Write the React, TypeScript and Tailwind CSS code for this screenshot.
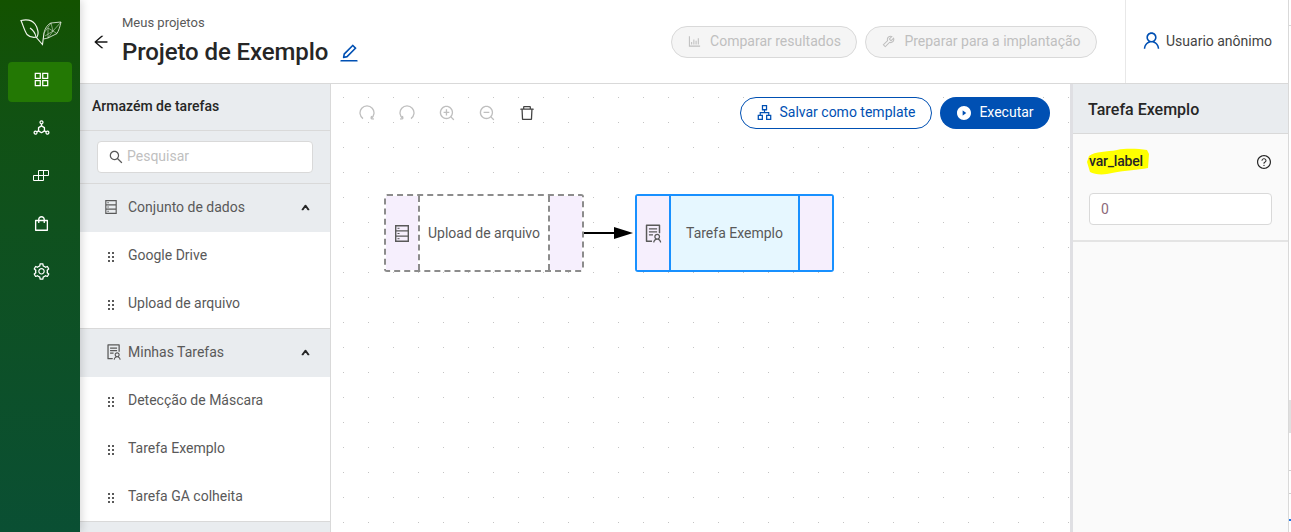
import type { ReactNode } from 'react';
import {
  AiOutlineAppstore,
  AiOutlineArrowLeft,
  AiOutlineBarChart,
  AiOutlineDelete,
  AiOutlineDeploymentUnit,
  AiOutlineEdit,
  AiOutlineQuestionCircle,
  AiOutlineSearch,
  AiOutlineSetting,
  AiOutlineShopping,
  AiOutlineSolution,
  AiOutlineTool,
  AiOutlineUp,
  AiOutlineUser,
  AiOutlineApartment,
  AiOutlineZoomIn,
  AiOutlineZoomOut,
  AiFillPlayCircle,
} from 'react-icons/ai';

function Logo() {
  return (
    <svg width="42" height="27" viewBox="0 0 42 27" fill="none" stroke="#f0f5ec">
      <path d="M1 1.5 C6 0.5 12 1 15 5 C18 9 19 15 17 18 C13 19 9 17.5 7 15.5 C4.5 12 3 6 1 1.5 Z" strokeWidth="1.2" />
      <path d="M10 9 C13 11 15 13 16 18 L22.5 25.5 L24 14" strokeWidth="1.1" />
      <path d="M24 14 C25 9 28 5 31 4 L41 3 C40 8 38.5 12 37 14.5 L28 19 L23.5 20" strokeWidth="0.8" />
      <path d="M24 14 L31 4 L33 12 L41 3 M33 12 L28 19 L28 9 L37 14.5 M25 17 L33 12" strokeWidth="0.5" />
    </svg>
  );
}

// the stepped blocks of the third rail entry
function BlocksIcon() {
  return (
    <svg width="16" height="11" viewBox="0 0 16 11" fill="none" stroke="currentColor" strokeWidth="1">
      <path d="M0.5 5.5 H10.5 V10.5 H0.5 Z M5.5 5.5 V0.5 H15.5 V5.5 H10.5 M5.5 5.5 V10.5 M10.5 0.5 V5.5" />
    </svg>
  );
}

// circular arrows of the canvas toolbar, the icon font has no exact match
function ArcIcon({ flip }: { flip?: boolean }) {
  return (
    <svg width="16" height="16" viewBox="0 0 16 16" fill="none" stroke="currentColor" strokeWidth="1.3" className={flip ? '-scale-x-100' : ''}>
      <path d="M4 13.6 A7 7 0 1 1 12 13.6" />
      <path d="M12 13.6 L12.6 11 M12 13.6 L14.8 14" />
    </svg>
  );
}

function DatasetIcon({ width, height }: { width: number; height: number }) {
  return (
    <svg width={width} height={height} viewBox="0 0 14 17" fill="none" stroke="#595959" strokeWidth="1.4">
      <path d="M0.7 0.7 H13.3 V16.3 H0.7 Z M0.7 5.9 H13.3 M0.7 11.1 H13.3" />
      <path d="M2.5 3.3 H4.5 M2.5 8.5 H4.5 M2.5 13.7 H4.5" strokeWidth="1" />
    </svg>
  );
}

function HolderDots() {
  return (
    <svg width="6" height="10" viewBox="0 0 6 10" fill="#595959">
      <path d="M0 0h2v2H0z M4 0h2v2H4z M0 4h2v2H0z M4 4h2v2H4z M0 8h2v2H0z M4 8h2v2H4z" />
    </svg>
  );
}

function RailItem({ icon, active }: { icon: ReactNode; active?: boolean }) {
  return (
    <div className={`flex h-10 w-16 items-center justify-center rounded-sm pb-[6px] pl-[2px] text-[19px] text-white ${active ? 'bg-[#237804]' : ''}`}>
      {icon}
    </div>
  );
}

function SectionHeader({ icon, label }: { icon: ReactNode; label: string }) {
  return (
    <div className="flex h-12 items-center bg-[#e9ecef] pb-[2px] pl-[25px] pr-[20px] text-[14px] text-[#595959]">
      <span className="flex w-[23px] text-[18px] text-[#595959]">{icon}</span>
      {label}
      <AiOutlineUp className="ml-auto text-[9px] text-[#262626]" strokeWidth={130} />
    </div>
  );
}

function TaskItem({ label }: { label: string }) {
  return (
    <div className="flex h-12 items-center bg-white pb-[2px] pl-[28px] text-[14px] text-[#595959]">
      <span className="mt-[3px] w-5">
        <HolderDots />
      </span>
      {label}
    </div>
  );
}

function ToolSlot({ children }: { children: ReactNode }) {
  return <span className="flex w-10 justify-center">{children}</span>;
}

function Node({ position, label, icon, selected }: { position: string; label: string; icon: ReactNode; selected?: boolean }) {
  const line = selected ? 'border-[#1890ff] border-solid' : 'border-[#8c8c8c] border-dashed';
  return (
    <div className={`absolute top-[110px] flex h-[78px] rounded-[3px] border-2 ${line} ${position}`}>
      <div className="flex w-8 items-center justify-center bg-[#f6effd] text-[21px] text-[#595959]">{icon}</div>
      <div className={`flex flex-1 items-center justify-center border-x-2 text-[14px] text-[#595959] ${line} ${selected ? 'bg-[#e6f7ff]' : 'bg-white'}`}>
        {label}
      </div>
      <div className="w-8 bg-[#f6effd]" />
    </div>
  );
}

export default function App() {
  return (
    <div className="flex h-[532px] w-[1291px] overflow-hidden bg-white font-['Roboto',sans-serif]">
      <nav className="relative z-10 flex w-20 shrink-0 flex-col items-center bg-gradient-to-b from-[#135200] to-[#0a4f33] shadow-[2px_0_8px_rgba(0,0,0,0.15)]">
        <div className="flex h-[62px] w-full items-start justify-center pl-[1px] pt-[19px]">
          <Logo />
        </div>
        <div className="flex flex-col gap-2">
          <RailItem active icon={<AiOutlineAppstore />} />
          <RailItem icon={<AiOutlineDeploymentUnit />} />
          <RailItem icon={<BlocksIcon />} />
          <RailItem icon={<AiOutlineShopping />} />
          <RailItem icon={<AiOutlineSetting />} />
        </div>
      </nav>

      <div className="flex min-w-0 flex-1 flex-col">
        <header className="flex h-[84px] shrink-0 items-center border-b border-[#d9d9d9] bg-white">
          <AiOutlineArrowLeft className="ml-3 text-[18px] text-[#141414]" />
          <div className="ml-3 mt-[14px] self-start">
            <div className="text-[13px] leading-[18px] text-[#595959]">Meus projetos</div>
            <div className="mt-[4px] flex items-center text-[24px] font-medium leading-[32px] tracking-[-0.1px] text-[#262626]">
              Projeto de Exemplo
              <AiOutlineEdit className="ml-[10px] mt-[2px] text-[22px] text-[#0050b3]" />
            </div>
          </div>
          <div className="ml-auto flex gap-2">
            <div className="flex h-8 w-[186px] items-center justify-center gap-2 rounded-full border border-[#d9d9d9] bg-[#f5f5f5] text-[14px] text-[#bfbfbf]">
              <AiOutlineBarChart className="text-[15px]" />
              Comparar resultados
            </div>
            <div className="flex h-8 w-[232px] items-center justify-center gap-2 rounded-full border border-[#d9d9d9] bg-[#f5f5f5] text-[14px] text-[#bfbfbf]">
              <AiOutlineTool className="text-[15px]" />
              Preparar para a implantação
            </div>
          </div>
          <div className="ml-7 flex h-full w-[163px] items-center gap-[4px] border-l border-[#e8e8e8] pl-[15px] text-[14px] text-[#434343]">
            <AiOutlineUser className="mt-[-3px] text-[21px] text-[#0050b3]" />
            Usuario anônimo
          </div>
        </header>

        <div className="flex min-h-0 flex-1">
          <aside className="w-[251px] shrink-0 overflow-hidden border-r border-[#d9d9d9] bg-[#e9ecef]">
            <div className="flex h-[46px] items-center px-3 pb-[2px] text-[14px] font-medium text-[#262626]">Armazém de tarefas</div>
            <div className="border-y border-[#d9d9d9] px-[17px] py-[10px]">
              <div className="flex h-8 items-center gap-[3px] rounded-sm border border-[#d9d9d9] bg-white px-[10px] pb-[2px] text-[14px] text-[#bfbfbf]">
                <AiOutlineSearch className="mt-[2px] text-[16px] text-[#595959]" />
                Pesquisar
              </div>
            </div>
            <SectionHeader icon={<DatasetIcon width={12} height={14} />} label="Conjunto de dados" />
            <TaskItem label="Google Drive" />
            <TaskItem label="Upload de arquivo" />
            <div className="h-px bg-[#d9d9d9]" />
            <SectionHeader icon={<AiOutlineSolution />} label="Minhas Tarefas" />
            <TaskItem label="Detecção de Máscara" />
            <TaskItem label="Tarefa Exemplo" />
            <TaskItem label="Tarefa GA colheita" />
            <div className="h-px bg-[#d9d9d9]" />
          </aside>

          <main className="relative min-w-0 flex-1 bg-white bg-[radial-gradient(circle,#c4c4c4_0.6px,transparent_0.8px)] bg-[size:25px_25px] bg-[position:0_1px]">
            <div className="flex h-[56px] items-center pl-4 pr-5 pt-[1px]">
              <div className="flex items-center text-[#bfbfbf]">
                <ToolSlot>
                  <ArcIcon />
                </ToolSlot>
                <ToolSlot>
                  <ArcIcon flip />
                </ToolSlot>
                <ToolSlot>
                  <AiOutlineZoomIn className="text-[18px]" />
                </ToolSlot>
                <ToolSlot>
                  <AiOutlineZoomOut className="text-[18px]" />
                </ToolSlot>
                <ToolSlot>
                  <AiOutlineDelete className="text-[18px] text-[#434343]" />
                </ToolSlot>
              </div>
              <div className="ml-auto flex gap-2">
                <div className="flex h-8 w-[192px] items-center justify-center gap-[6px] rounded-full border border-[#0050b3] bg-white text-[14px] text-[#0050b3]">
                  <AiOutlineApartment className="text-[17px]" />
                  Salvar como template
                </div>
                <div className="flex h-8 w-[110px] items-center justify-center gap-[7px] rounded-full bg-[#0050b3] text-[14px] text-white">
                  <AiFillPlayCircle className="text-[16px]" />
                  Executar
                </div>
              </div>
            </div>
            <Node position="left-[53px] w-[200px]" label="Upload de arquivo" icon={<DatasetIcon width={14} height={17} />} />
            <svg className="absolute left-[253px] top-[141px]" width="50" height="16" viewBox="0 0 50 16">
              <path d="M0 8 H32" stroke="#000" strokeWidth="2" />
              <path d="M30 2 L49 8 L30 14 Z" fill="#000" />
            </svg>
            <Node position="left-[304px] w-[199px]" label="Tarefa Exemplo" icon={<AiOutlineSolution />} selected />
          </main>

          <aside className="w-[218px] shrink-0 border-l-[3px] border-[#dfdfe3] bg-[#fafafa]">
            <div className="flex h-[50px] items-center border-b border-[#d9d9d9] bg-[#e9ecef] pl-[15px] pt-[3px] text-[16px] font-medium text-[#262626]">
              Tarefa Exemplo
            </div>
            <div className="border-b-2 border-[#e4e4e4] px-4 pb-[15px] pt-[15px]">
              <div className="flex h-[25px] items-center justify-between">
                <span className="relative text-[14px] font-medium leading-[17px] tracking-[-0.2px] text-[#262626]">
                  <svg className="absolute -left-[2px] -top-[5px]" width="62" height="27" viewBox="0 0 62 27" fill="#ffff00">
                    <path d="M2 8 C8 3 20 4 30 2 C40 0 52 1 60 2 L62 6 L61 20 C50 22 40 22 25 25 C18 27 8 27 3 24 L0 14 Z" />
                  </svg>
                  <span className="relative">var_label</span>
                </span>
                <AiOutlineQuestionCircle className="text-[16px] text-[#262626]" />
              </div>
              <div className="mt-[19px] flex h-8 items-center rounded-sm border border-[#d9d9d9] bg-white px-[11px] text-[14px] text-[#8c6a7a]">0</div>
            </div>
          </aside>
        </div>
      </div>

      {/* sliver of the window behind, at the far right edge */}
      <div className="flex w-[3px] shrink-0 flex-col border-l border-[#d9d9d9] bg-white">
        <div className="mt-[25px] h-px bg-[#d9d9d9]" />
        <div className="mt-[374px] h-[33px] bg-[#e0e0e0]" />
        <div className="mt-[37px] h-px bg-[#d0d0d0]" />
        <div className="mt-[22px] h-px bg-[#d0d0d0]" />
        <div className="mt-[25px] h-[2px] bg-[#1a73e8]" />
      </div>
    </div>
  );
}
